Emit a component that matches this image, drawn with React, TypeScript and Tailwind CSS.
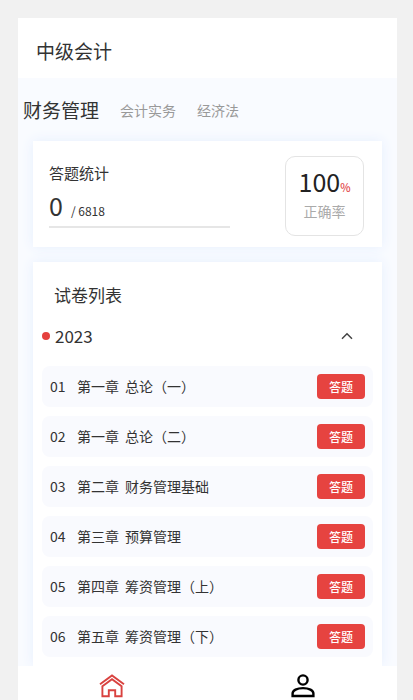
import { useState } from "react";

const subjects = ["财务管理", "会计实务", "经济法"];

const papers = [
  { no: "01", chapter: "第一章", title: "总论（一）" },
  { no: "02", chapter: "第一章", title: "总论（二）" },
  { no: "03", chapter: "第二章", title: "财务管理基础" },
  { no: "04", chapter: "第三章", title: "预算管理" },
  { no: "05", chapter: "第四章", title: "筹资管理（上）" },
  { no: "06", chapter: "第五章", title: "筹资管理（下）" },
];

function SubjectTabs() {
  const [active, setActive] = useState(0);
  return (
    <nav className="flex h-[63px] items-center gap-[21px] pl-[5px]" aria-label="科目">
      {subjects.map((name, i) => (
        <button
          key={name}
          type="button"
          onClick={() => setActive(i)}
          className={
            i === active
              ? "text-[19px] leading-7 text-[#333]"
              : "text-[14px] leading-7 text-[#999]"
          }
        >
          {name}
        </button>
      ))}
    </nav>
  );
}

function StatsCard() {
  return (
    <section className="flex h-[106px] items-start justify-between bg-white pt-[15px] pr-[18px] pl-4 shadow-[0_0_12px_#e6effd]">
      <div className="w-[181px] pt-[7px]">
        <h2 className="text-[15px] leading-5 text-[#333]">答题统计</h2>
        <p className="mt-1 flex items-baseline gap-2 border-b-2 border-[#e6e6e6] pb-[3px] text-[#333]">
          <span className="text-[25px] leading-9">0</span>
          <span className="text-[12px]">/ 6818</span>
        </p>
      </div>
      <div className="flex h-20 w-[79px] flex-col items-center rounded-[10px] border border-[#e4e4e4] pt-2">
        <p className="flex items-baseline text-[#222]">
          <span className="text-[25px] leading-8">100</span>
          <span className="text-[11px] font-medium text-[#e2474a]">%</span>
        </p>
        <p className="mt-[2px] text-[14px] leading-6 text-[#aaa]">正确率</p>
      </div>
    </section>
  );
}

function PaperList() {
  const [open, setOpen] = useState(true);
  return (
    <section className="mt-[15px] bg-white px-[9px] pt-5 pb-[9px] shadow-[0_0_12px_#e6effd]">
      <h2 className="pl-3 text-[17px] leading-[26px] text-[#333]">试卷列表</h2>
      <button
        type="button"
        aria-expanded={open}
        onClick={() => setOpen(!open)}
        className="mt-[14px] flex w-full items-center pr-5 text-[17px] leading-7 text-[#333]"
      >
        <span className="mr-[5px] size-2 rounded-full bg-[#e5403d]" />
        2023
        <svg className="ml-auto" width="12" height="8" viewBox="0 0 12 8" fill="none" stroke="#444" strokeWidth="1.5">
          <path d="M1 6.8 6 1.8l5 5" />
        </svg>
      </button>
      {open && (
        <ul className="mt-4 flex flex-col gap-[9px]">
          {papers.map((p) => (
            <li key={p.no} className="flex h-[41px] items-center rounded-lg bg-[#f9fafe] px-2 text-[14px] text-[#333]">
              <span className="w-[27px]">{p.no}</span>
              <span className="mr-[6px]">{p.chapter}</span>
              <span>{p.title}</span>
              <button
                type="button"
                className="ml-auto h-[25px] w-12 rounded-[4px] bg-[#e64340] text-[12px] font-medium text-white"
              >
                答题
              </button>
            </li>
          ))}
        </ul>
      )}
    </section>
  );
}

function TabBar() {
  return (
    <nav className="grid h-[34px] shrink-0 grid-cols-2 gap-1 bg-white" aria-label="主导航">
      <a href="#home" aria-label="首页" className="flex justify-center pt-2 text-[#d9423f]">
        <svg width="26" height="24" viewBox="0 0 26 24" fill="none" stroke="currentColor" strokeWidth="1.9">
          <path d="M1 10.2 13 1.5l12 8.7" />
          <path d="M3.4 12.3 13 5.3l9.6 7V22.3H16.2V16.3H9.8V22.3H3.4Z" />
        </svg>
      </a>
      <a href="#mine" aria-label="我的" className="flex justify-center pt-2 text-black">
        <svg width="24" height="24" viewBox="0 0 24 24" fill="none" stroke="currentColor" strokeWidth="2.4">
          <circle cx="12" cy="6" r="4.6" />
          <path d="M1.6 22V19.5C1.6 16.4 6 14.1 12 14.1S22.4 16.4 22.4 19.5V22Z" />
        </svg>
      </a>
    </nav>
  );
}

export default function App() {
  return (
    <div className="h-screen overflow-hidden bg-[#f1f1f1] pt-[18px] pr-4 pl-[18px] font-['Noto_Sans_CJK_SC',sans-serif]">
      <main className="flex h-full flex-col bg-[#f9fbff]">
        <header className="flex h-[60px] shrink-0 items-center bg-white pt-[6px] pl-[18px]">
          <h1 className="text-[19px] leading-7 text-[#333]">中级会计</h1>
        </header>
        <div className="min-h-0 flex-1 overflow-hidden">
          <SubjectTabs />
          <div className="px-[15px]">
            <StatsCard />
            <PaperList />
          </div>
        </div>
        <TabBar />
      </main>
    </div>
  );
}
